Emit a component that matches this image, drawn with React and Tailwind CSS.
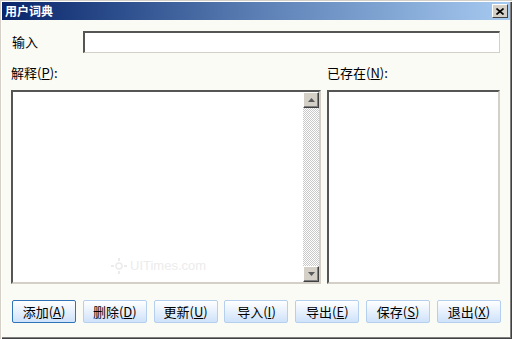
import React from 'react';

const font = { fontFamily: '"Noto Sans CJK SC", "Liberation Sans", sans-serif' };

const Mn = ({ children }) => <span className="underline underline-offset-1">{children}</span>;

const ScrollBtn = ({ up }) => (
  <div className="w-[16px] h-[16px] bg-[#d4d0c8] border-t border-l border-[#ffffff] border-r border-b border-r-[#404040] border-b-[#404040] shadow-[inset_-1px_-1px_#808080] flex items-center justify-center">
    <svg width="7" height="4" viewBox="0 0 7 4">
      {up ? <path d="M3.5 0 L7 4 L0 4 Z" fill="#5a5a5a" /> : <path d="M0 0 L7 0 L3.5 4 Z" fill="#5a5a5a" />}
    </svg>
  </div>
);

const Button = ({ label, k, focused }) => (
  <button
    className={`w-[64px] h-[23px] rounded-[2px] border text-[13px] leading-[14px] text-black bg-linear-to-b from-[#ffffff] to-[#cfe2fa] ${
      focused ? 'border-[#2f73b8]' : 'border-[#b5cfee]'
    }`}
    style={font}
  >
    {label}(<Mn>{k}</Mn>)
  </button>
);

export default function App() {
  const buttons = [
    ['添加', 'A'],
    ['删除', 'D'],
    ['更新', 'U'],
    ['导入', 'I'],
    ['导出', 'E'],
    ['保存', 'S'],
    ['退出', 'X'],
  ];

  return (
    <div
      className="w-[512px] h-[339px] bg-[#fbfbf6] p-[2px] flex flex-col shadow-[inset_1px_1px_#d4d0c8,inset_2px_2px_#ffffff,inset_-1px_-1px_#404040,inset_-2px_-2px_#808080]"
      style={font}
    >
      <div className="h-[18px] flex items-center justify-between px-[2px] bg-linear-to-r from-[#0a246a] via-[#5b7fb4] to-[#a6caf0]">
        <span className="text-white font-bold text-[12px] leading-[14px] pl-[1px]">用户词典</span>
        <div className="w-[16px] h-[14px] bg-[#d4d0c8] border-t border-l border-white border-r border-b border-r-[#404040] border-b-[#404040] flex items-center justify-center">
          <svg width="8" height="7" viewBox="0 0 8 7">
            <path d="M0.5 0.5 L7.5 6.5 M7.5 0.5 L0.5 6.5" stroke="#000" strokeWidth="1.6" />
          </svg>
        </div>
      </div>

      <div className="flex-1 flex flex-col px-[9px] pr-[10px]">
        <div className="flex items-center mt-[11px] h-[22px]">
          <span className="w-[72px] text-[13px] leading-[14px] text-black pl-[1px]">输入</span>
          <div className="flex-1 h-[22px] bg-white border-2 border-t-[#555555] border-l-[#555555] border-b-[#d4d0c8] border-r-[#d4d0c8] border-b border-r" />
        </div>

        <div className="flex gap-[6px] mt-[13px]">
          <div className="w-[310px] flex flex-col">
            <span className="text-[13px] leading-[14px] text-black h-[24px]">
              解释(<Mn>P</Mn>):
            </span>
            <div className="relative h-[194px] bg-white border-2 border-t-[#555555] border-l-[#555555] border-b-[#d4d0c8] border-r-[#d4d0c8] flex justify-end">
              <div className="w-[16px] flex flex-col">
                <ScrollBtn up />
                <div className="flex-1 bg-[repeating-conic-gradient(#c8c8c8_0_25%,#ffffff_0_50%)] bg-size-[2px_2px]" />
                <ScrollBtn />
              </div>
              <div className="absolute left-[98px] top-[166px] flex items-center gap-[3px] text-[#ececec]">
                <svg width="16" height="16" viewBox="0 0 16 16">
                  <rect x="7" y="0" width="2" height="3" fill="#ebebeb" />
                  <rect x="7" y="13" width="2" height="3" fill="#ebebeb" />
                  <rect x="0" y="7" width="3" height="2" fill="#ebebeb" />
                  <rect x="13" y="7" width="3" height="2" fill="#ebebeb" />
                  <circle cx="8" cy="8" r="3" fill="none" stroke="#ebebeb" strokeWidth="1.5" />
                </svg>
                <span className="text-[13px] leading-[14px]" style={{ fontFamily: '"Liberation Sans", sans-serif' }}>
                  UITimes.com
                </span>
              </div>
            </div>
          </div>
          <div className="flex-1 flex flex-col">
            <span className="text-[13px] leading-[14px] text-black h-[24px]">
              已存在(<Mn>N</Mn>):
            </span>
            <div className="h-[194px] bg-white border-2 border-t-[#555555] border-l-[#555555] border-b-[#d4d0c8] border-r-[#d4d0c8]" />
          </div>
        </div>

        <div className="flex justify-between mt-[16px] pl-[1px] w-[490px]">
          {buttons.map(([label, k], i) => (
            <Button key={k} label={label} k={k} focused={i === 0} />
          ))}
        </div>
      </div>
    </div>
  );
}
